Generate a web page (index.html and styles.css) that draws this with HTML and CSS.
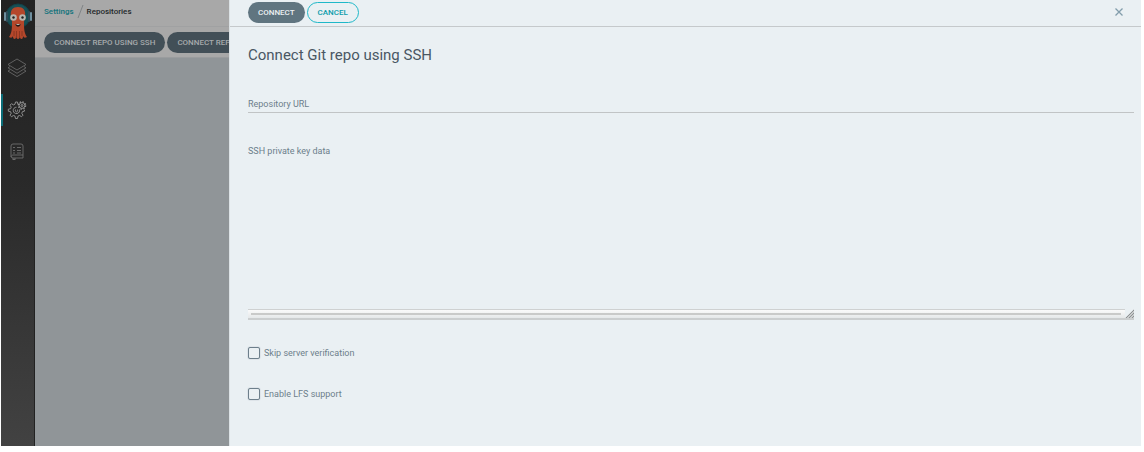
FILE: index.html
```html
<!DOCTYPE html>
<html lang="en">
<head>
  <meta charset="UTF-8" />
  <title>Repositories</title>
  <link rel="stylesheet" href="styles.css">
</head>
<body>
  <div class="layout">

    <!-- Navigation bar -->
    <nav class="nav-bar">
      <a class="nav-logo" href="#" aria-label="Home">
        <svg width="30" height="38" viewBox="0 0 30 38">
          <circle cx="15" cy="14" r="12" fill="#174f55" stroke="#10434a" />
          <rect x="1" y="10" width="2" height="9" rx="1" fill="#6f8f9f" />
          <rect x="3" y="9" width="2" height="11" rx="1" fill="#2f4b58" />
          <rect x="25" y="9" width="2" height="11" rx="1" fill="#2f4b58" />
          <rect x="27" y="10" width="2" height="9" rx="1" fill="#6f8f9f" />
          <path d="M8 14C7 8 10 5 15 5s8 3 7 9c0 2-1 4-1 6 0 6 0 11 3 15-2 1-3 1-4-1 0 1 0 2-1 3-2 0-2-1-2-3 0 1-1 3-2 3s-2-2-2-3c0 2 0 3-2 3-1-1-1-2-1-3-1 2-2 2-4 1 3-4 3-9 3-15 0-2-1-4-1-6z" fill="#b5472b" />
          <path d="M11 29v5M13.500 29v6M16.500 29v6M19 29v5" stroke="#84321f" stroke-width="0.800" />
          <circle cx="10.500" cy="15.500" r="3.300" fill="#b9b5ae" />
          <circle cx="19.500" cy="15.500" r="3.300" fill="#b9b5ae" />
          <circle cx="10.500" cy="15.500" r="1.200" fill="#222" />
          <circle cx="19.500" cy="15.500" r="1.200" fill="#222" />
          <path d="M12.500 22h5c0 3.500-5 3.500-5 0z" fill="#2c1713" />
          <path d="M13.500 22h3v1h-3z" fill="#b9b5ae" />
        </svg>
      </a>
      <a class="nav-item" href="#" aria-label="Applications">
        <svg width="20" height="20" viewBox="0 0 20 20" fill="none" stroke="#6e6e6e" stroke-width="0.800" stroke-linejoin="round">
          <path d="M10 1l9 5.500-9 5.500-9-5.500z" />
          <path d="M3 8.500L1 9.800l9 5.500 9-5.500-2-1.300" />
          <path d="M3 11.800L1 13.100l9 5.500 9-5.500-2-1.300" />
        </svg>
      </a>
      <a class="nav-item nav-item-active" href="#" aria-label="Settings">
        <svg width="20" height="20" viewBox="0 0 20 20" fill="none" stroke="#9a9a9a" stroke-width="0.900" stroke-linejoin="round">
          <path d="M12 4.700l-1.200-.5L10.500 2h-2l-.5 2.200-1.600.7L4.500 3.700 3 5.200l1.200 1.900-.6 1.600-2.300.5v2l2.300.5.6 1.600L3 15.200l1.500 1.500 1.900-1.200 1.600.6.5 2.400h2l.5-2.400 1.600-.6 1.900 1.200 1.500-1.500-1.200-1.900.6-1.600 2-.5v-1.500" />
          <path d="M12.500 9.500A3.200 3.200 0 1 1 9.500 7.200M10 9.500a1.200 1.200 0 1 1-1 0" />
          <circle cx="15" cy="5.500" r="2.900" />
          <circle cx="15" cy="5.500" r="1" />
          <circle cx="15" cy="5.500" r="3.700" stroke-width="1.200" stroke-dasharray="1.450 1.450" />
        </svg>
      </a>
      <a class="nav-item" href="#" aria-label="Documentation">
        <svg width="20" height="20" viewBox="0 0 20 20" fill="none" stroke="#6e6e6e" stroke-width="0.900">
          <path d="M6 2h8a2 2 0 0 1 2 2v12H6a2 2 0 0 1-2-2V4a2 2 0 0 1 2-2zM4 15c0-1 1-2 2-2h10" />
          <path d="M6 5l1 1 1-1M6 8l1 1 1-1M10 5.500h4M10 8.500h4M6 11h2M10 11h4" />
          <path d="M6 16v2l1-1 1 1v-2" />
        </svg>
      </a>
    </nav>

    <!-- Repositories page behind the panel -->
    <main class="page">
      <div class="breadcrumb">
        <a class="breadcrumb-link" href="#">Settings</a>
        <svg width="7" height="15" viewBox="0 0 7 15"><path d="M6 1L1 14" stroke="#808486" /></svg>
        <span class="breadcrumb-current">Repositories</span>
      </div>
      <div class="toolbar">
        <button class="btn btn-dimmed" type="button">CONNECT REPO USING SSH</button>
        <button class="btn btn-dimmed" type="button">CONNECT REPO USING HTTPS</button>
      </div>
    </main>

    <!-- Sliding panel -->
    <section class="panel">
      <div class="panel-header">
        <button class="btn btn-base" type="submit" form="connectForm">CONNECT</button>
        <button class="btn btn-outline" type="button">CANCEL</button>
        <button class="panel-close" type="button" aria-label="Close">
          <svg width="8" height="8" viewBox="0 0 8 8"><path d="M0.500 0.500l7 7M7.500 0.500l-7 7" stroke="#829dab" stroke-width="1.300" /></svg>
        </button>
      </div>
      <form class="panel-body" id="connectForm">
        <h1>Connect Git repo using SSH</h1>
        <div class="field">
          <label for="repoUrl">Repository URL</label>
          <input class="field-input" type="text" id="repoUrl" />
        </div>
        <div class="field">
          <label for="sshKey">SSH private key data</label>
          <textarea class="field-area" id="sshKey"></textarea>
          <div class="scroll-row">
            <div class="scroll-track"><div class="scroll-thumb"></div></div>
            <svg width="9" height="9" viewBox="0 0 9 9"><path d="M0 9L9 0v9z" fill="#c9cccd" /><path d="M1 9l8-8M4 9l5-5M7 9l2-2" stroke="#8e9294" /></svg>
          </div>
        </div>
        <div class="check">
          <input type="checkbox" id="skipVerify" />
          <label for="skipVerify">Skip server verification</label>
        </div>
        <div class="check">
          <input type="checkbox" id="enableLfs" />
          <label for="enableLfs">Enable LFS support</label>
        </div>
      </form>
    </section>

  </div>
</body>
</html>
```

FILE: styles.css
```css
* {
  box-sizing: border-box;
  margin: 0;
  padding: 0;
}
body {
  font-family: Roboto, "Liberation Sans", sans-serif;
  font-size: 9px;
  line-height: 12px;
  background: #fff;
  color: #6d7f8b;
}
.layout {
  display: grid;
  grid-template-columns: 34px 194px 1fr;
  min-height: 100vh;
  padding: 0 3px 6px 1px;
}

/* Navigation bar */
.nav-bar {
  display: flex;
  flex-direction: column;
  align-items: center;
  background: linear-gradient(#222, #292929 40%, #424242);
  border-right: 1px solid #222;
}
.nav-logo {
  height: 52px;
  padding-top: 2px;
}
.nav-item {
  display: flex;
  align-items: center;
  justify-content: center;
  width: 100%;
  height: 32px;
  margin-bottom: 10px;
  padding-right: 3px;
  border-left: 2px solid transparent;
}
.nav-item-active {
  border-left-color: #0a6c77;
}

/* Page */
.page {
  overflow: hidden;
  background: #909598;
}
.breadcrumb {
  display: flex;
  align-items: center;
  gap: 3px;
  height: 27px;
  padding: 0 9px 3px;
  font-size: 8px;
  font-weight: 500;
  background: #a8a8a8;
  border-bottom: 1px solid #a0a1a2;
}
.breadcrumb-link {
  color: #12737c;
  text-decoration: none;
}
.breadcrumb-current {
  color: #24282b;
}
.toolbar {
  display: flex;
  gap: 2px;
  height: 31px;
  padding: 5px 9px;
  background: #a8a8a8;
  border-bottom: 1px solid #9a9c9e;
}
.btn {
  flex: none;
  height: 21px;
  padding: 0 10px;
  border: none;
  border-radius: 11px;
  font-family: inherit;
  font-size: 8px;
  font-weight: 500;
  white-space: nowrap;
  cursor: pointer;
}
.btn-dimmed {
  background: #424f57;
  color: #a6aaac;
}
.btn-base {
  background: #607580;
  color: #edf1f3;
}
.btn-outline {
  background: transparent;
  border: 1px solid #1fb8c8;
  color: #0a9cab;
}

/* Panel */
.panel {
  background: #eaf0f3;
  border-left: 1px solid #dce2e5;
}
.panel-header {
  display: flex;
  align-items: center;
  gap: 2px;
  height: 27px;
  padding: 0 18px 2px;
  border-bottom: 1px solid #c5c9cb;
}
.panel-close {
  display: flex;
  margin-left: auto;
  background: none;
  border: none;
  cursor: pointer;
}
.panel-body {
  padding: 18px 7px 0 18px;
}
h1 {
  margin-bottom: 32px;
  font-size: 15px;
  font-weight: 400;
  line-height: 21px;
  color: #495763;
}
.field {
  display: flex;
  flex-direction: column;
  margin-bottom: 32px;
}
.field-input {
  height: 3px;
  background: transparent;
  border: none;
  border-bottom: 1px solid #c1c4c5;
  outline: none;
}
.field-area {
  height: 152px;
  background: transparent;
  border: none;
  outline: none;
  resize: none;
  color: inherit;
}
.scroll-row {
  display: flex;
  align-items: center;
  height: 11px;
  border-bottom: 2px solid #cbcecf;
}
.scroll-track {
  flex: 1;
  height: 9px;
  padding: 3px 4px 0 3px;
  background: linear-gradient(#fafafa, #e5e8e9);
  border-top: 1px solid #cfd1d1;
}
.scroll-thumb {
  height: 2px;
  background: #c9cac9;
}
.check {
  display: flex;
  align-items: center;
  gap: 4px;
  height: 13px;
  margin-bottom: 28px;
}
.field + .check {
  margin-top: -6px;
}
.check input {
  appearance: none;
  width: 12px;
  height: 12px;
  border: 1px solid #6d7f8b;
  border-radius: 2px;
  box-shadow: 0 0 1px #6d7f8b;
}
.check input:checked {
  background: #6d7f8b;
}
```
